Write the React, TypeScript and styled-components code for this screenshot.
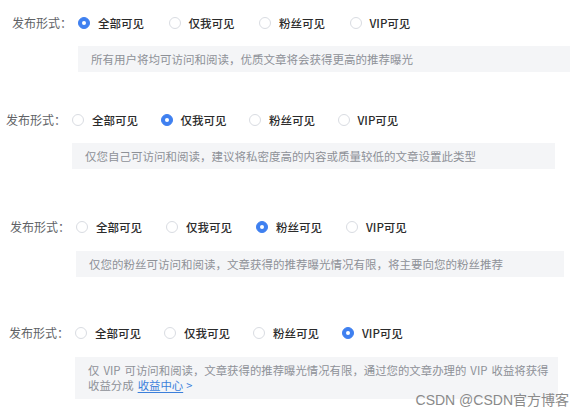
import React from "react";
import styled, { createGlobalStyle } from "styled-components";

const Global = createGlobalStyle`
  html, body { margin: 0; padding: 0; background: #ffffff; }
  body { font-family: "Noto Sans CJK SC", "Noto Sans", sans-serif; }
`;

const Page = styled.div`
  position: relative;
  width: 585px;
  height: 413px;
  overflow: hidden;
  background: #ffffff;
  display: flex;
  flex-direction: column;
`;

const Block = styled.section<{ $indent: number; $top: number }>`
  display: grid;
  grid-template-columns: 66px auto;
  margin-top: ${(p) => p.$top}px;
  padding-left: ${(p) => p.$indent}px;
`;

const Label = styled.div`
  height: 16px;
  line-height: 16px;
  font-size: 12px;
  color: #606266;
  white-space: nowrap;
`;

const Content = styled.div<{ $gap: number }>`
  display: flex;
  flex-direction: column;
  gap: ${(p) => p.$gap}px;
`;

const Options = styled.div`
  display: flex;
  align-items: center;
  height: 16px;
`;

const Option = styled.label<{ $pitch: number }>`
  flex: 0 0 ${(p) => p.$pitch}px;
  display: flex;
  align-items: center;
  gap: 8px;
  font-size: 11.5px;
  font-weight: 500;
  color: #2b2b2b;
  white-space: nowrap;
`;

const Radio = styled.span<{ $on: boolean }>`
  box-sizing: border-box;
  width: 12px;
  height: 12px;
  border-radius: 50%;
  display: flex;
  align-items: center;
  justify-content: center;
  background: ${(p) => (p.$on ? "#3f80f0" : "#ffffff")};
  border: 1px solid ${(p) => (p.$on ? "#3f80f0" : "#d9dce2")};
  &::after {
    content: "";
    width: 4px;
    height: 4px;
    border-radius: 50%;
    background: #ffffff;
    display: ${(p) => (p.$on ? "block" : "none")};
  }
`;

const Desc = styled.div<{ $w: number }>`
  box-sizing: border-box;
  width: ${(p) => p.$w}px;
  background: #f4f5f7;
  padding: 6px 13px;
  font-size: 11.5px;
  line-height: 14px;
  color: #8e9197;
  white-space: nowrap;
`;

const TallDesc = styled(Desc)`
  line-height: 15px;
  font-size: 11.4px;
  word-spacing: 1.5px;
`;

const Link = styled.a`
  color: #3b7fdb;
  text-decoration: underline;
  text-underline-offset: 2px;
`;

const Chevron = styled.span`
  color: #3b7fdb;
  margin-left: 3px;
  font-size: 11px;
`;

const Watermark = styled.div`
  position: absolute;
  right: 16px;
  bottom: 4px;
  font-family: "Liberation Sans", "Noto Sans CJK SC", sans-serif;
  font-size: 14px;
  color: #8a8a8a;
  white-space: nowrap;
`;

const OPTIONS = ["全部可见", "仅我可见", "粉丝可见", "VIP可见"];

type Cfg = {
  indent: number;
  top: number;
  gap: number;
  pitch: number;
  width: number;
  selected: number;
  desc: React.ReactNode;
  tall?: boolean;
};

const blocks: Cfg[] = [
  {
    indent: 12,
    top: 15,
    gap: 15,
    pitch: 90.5,
    width: 492,
    selected: 0,
    desc: "所有用户将均可访问和阅读，优质文章将会获得更高的推荐曝光",
  },
  {
    indent: 6,
    top: 40,
    gap: 15,
    pitch: 88.5,
    width: 483,
    selected: 1,
    desc: "仅您自己可访问和阅读，建议将私密度高的内容或质量较低的文章设置此类型",
  },
  {
    indent: 10,
    top: 50,
    gap: 16,
    pitch: 90,
    width: 488,
    selected: 2,
    desc: "仅您的粉丝可访问和阅读，文章获得的推荐曝光情况有限，将主要向您的粉丝推荐",
  },
  {
    indent: 9,
    top: 48,
    gap: 16,
    pitch: 89,
    width: 483,
    selected: 3,
    tall: true,
    desc: (
      <>
        仅 VIP 可访问和阅读，文章获得的推荐曝光情况有限，通过您的文章办理的 VIP 收益将获得
        <br />
        收益分成 <Link>收益中心</Link>
        <Chevron>&gt;</Chevron>
      </>
    ),
  },
];

export default function App() {
  return (
    <Page>
      <Global />
      {blocks.map((b, i) => (
        <Block key={i} $indent={b.indent} $top={b.top}>
          <Label>发布形式：</Label>
          <Content $gap={b.gap}>
            <Options>
              {OPTIONS.map((o, j) => (
                <Option key={o} $pitch={b.pitch}>
                  <Radio $on={j === b.selected} />
                  {o}
                </Option>
              ))}
            </Options>
            {b.tall ? (
              <TallDesc $w={b.width}>{b.desc}</TallDesc>
            ) : (
              <Desc $w={b.width}>{b.desc}</Desc>
            )}
          </Content>
        </Block>
      ))}
      <Watermark>CSDN @CSDN官方博客</Watermark>
    </Page>
  );
}
